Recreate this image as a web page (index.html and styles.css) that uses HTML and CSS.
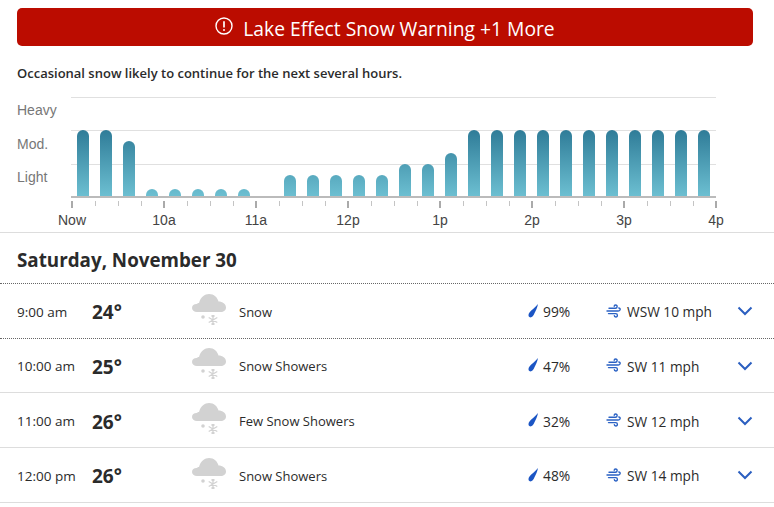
FILE: index.html
```html
<!DOCTYPE html>
<html lang="en">
<head>
  <meta charset="UTF-8">
  <title>Hourly Forecast</title>
  <link rel="stylesheet" href="styles.css">
</head>
<body>

<svg class="defs" width="0" height="0" aria-hidden="true">
  <defs>
    <linearGradient id="barFill" gradientUnits="userSpaceOnUse" x1="0" y1="33" x2="0" y2="100">
      <stop offset="0" stop-color="#2f7c98"/>
      <stop offset="1" stop-color="#6dc0d2"/>
    </linearGradient>
    <symbol id="snowIcon" viewBox="0 0 36 36">
      <path fill="#d2d2d2" d="M6 19C3 19 1 17.3 1 15C1 12.6 3 11 5.5 11C6.5 10.5 7 10 8 10C9.5 4 14 1 18 1C23 1 26.5 4.5 27.5 8.5C31.5 8.5 35 11 35 14.5C35 17.3 32.5 19 30 19Z"/>
      <circle cx="12" cy="24" r="1.8" fill="#d2d2d2"/>
      <path stroke="#d2d2d2" stroke-width="1.3" fill="none" d="M22 22V32M17.7 24.5L26.3 29.5M17.7 29.5L26.3 24.5M20.5 22.5L22 24L23.5 22.5M20.5 31.5L22 30L23.5 31.5"/>
    </symbol>
    <symbol id="dropIcon" viewBox="0 0 10 14">
      <path fill="#1b55c4" d="M10 0C9.2 4 8 6 6.6 9C5.5 12 3.5 14 1.8 13.3C0 12.5 0.2 10 1.5 8.5C3.5 6 7 3.5 10 0Z"/>
    </symbol>
    <symbol id="windIcon" viewBox="0 0 15 14">
      <path fill="none" stroke="#2b62c4" stroke-width="1.4" stroke-linecap="round" d="M3 4.2H9.5C11.5 4.2 11.8 1 9.6 1C8.6 1 8.2 1.7 8.2 2.3M1 7H12.3C14.6 7 14.8 4 12.8 4M2.5 9.6H9.8C11.8 9.6 12 13 9.8 13C8.8 13 8.3 12.2 8.3 11.6"/>
    </symbol>
    <symbol id="chevronIcon" viewBox="0 0 16 10">
      <path fill="none" stroke="#2b5fc0" stroke-width="2" d="M1.5 1.5L8 8L14.5 1.5"/>
    </symbol>
  </defs>
</svg>

<div class="alert">
  <svg class="alert-icon" viewBox="0 0 18 18">
    <circle cx="9" cy="9" r="8" fill="none" stroke="#fff" stroke-width="1.4"/>
    <path d="M9 4.2V10.5" stroke="#fff" stroke-width="1.7" fill="none"/>
    <circle cx="9" cy="13" r="1" fill="#fff"/>
  </svg>
  <span>Lake Effect Snow Warning +1 More</span>
</div>

<p class="summary">Occasional snow likely to continue for the next several hours.</p>

<svg class="chart" viewBox="0 0 774 135" width="774" height="135">
  <g class="grid">
    <line x1="71" x2="716" y1="0.5" y2="0.5"/>
    <line x1="71" x2="716" y1="33.5" y2="33.5"/>
    <line x1="71" x2="716" y1="67.5" y2="67.5"/>
  </g>
  <g class="level">
    <text x="17" y="18">Heavy</text>
    <text x="17" y="52">Mod.</text>
    <text x="17" y="85">Light</text>
  </g>
  <g fill="url(#barFill)">
    <path d="M77 100V39a6 6 0 0 1 12 0V100Z"/>
    <path d="M100 100V39a6 6 0 0 1 12 0V100Z"/>
    <path d="M123 100V50a6 6 0 0 1 12 0V100Z"/>
    <path d="M146 100V98a6 6 0 0 1 12 0V100Z"/>
    <path d="M169 100V98a6 6 0 0 1 12 0V100Z"/>
    <path d="M192 100V98a6 6 0 0 1 12 0V100Z"/>
    <path d="M215 100V98a6 6 0 0 1 12 0V100Z"/>
    <path d="M238 100V98a6 6 0 0 1 12 0V100Z"/>
    <path d="M284 100V84a6 6 0 0 1 12 0V100Z"/>
    <path d="M307 100V84a6 6 0 0 1 12 0V100Z"/>
    <path d="M330 100V84a6 6 0 0 1 12 0V100Z"/>
    <path d="M353 100V84a6 6 0 0 1 12 0V100Z"/>
    <path d="M376 100V84a6 6 0 0 1 12 0V100Z"/>
    <path d="M399 100V73a6 6 0 0 1 12 0V100Z"/>
    <path d="M422 100V73a6 6 0 0 1 12 0V100Z"/>
    <path d="M445 100V62a6 6 0 0 1 12 0V100Z"/>
    <path d="M468 100V39a6 6 0 0 1 12 0V100Z"/>
    <path d="M491 100V39a6 6 0 0 1 12 0V100Z"/>
    <path d="M514 100V39a6 6 0 0 1 12 0V100Z"/>
    <path d="M537 100V39a6 6 0 0 1 12 0V100Z"/>
    <path d="M560 100V39a6 6 0 0 1 12 0V100Z"/>
    <path d="M583 100V39a6 6 0 0 1 12 0V100Z"/>
    <path d="M606 100V39a6 6 0 0 1 12 0V100Z"/>
    <path d="M629 100V39a6 6 0 0 1 12 0V100Z"/>
    <path d="M652 100V39a6 6 0 0 1 12 0V100Z"/>
    <path d="M675 100V39a6 6 0 0 1 12 0V100Z"/>
    <path d="M698 100V39a6 6 0 0 1 12 0V100Z"/>
  </g>
  <line class="base" x1="71" x2="716" y1="100" y2="100"/>
  <path class="ticks" d="M72.5 104V109M95.5 104V109M118.5 104V109M141.5 104V109M164.5 104V109M187.5 104V109M210.5 104V109M233.5 104V109M256.5 104V109M279.5 104V109M302.5 104V109M325.5 104V109M348.5 104V109M371.5 104V109M394.5 104V109M417.5 104V109M440.5 104V109M463.5 104V109M486.5 104V109M509.5 104V109M532.5 104V109M555.5 104V109M578.5 104V109M601.5 104V109M624.5 104V109M647.5 104V109M670.5 104V109M693.5 104V109M716.5 104V109"/>
  <path class="ticks major" d="M72 104V111M164 104V111M256 104V111M348 104V111M440 104V111M532 104V111M624 104V111M716 104V111"/>
  <g class="hours">
    <text x="72" y="128">Now</text>
    <text x="164" y="128">10a</text>
    <text x="256" y="128">11a</text>
    <text x="348" y="128">12p</text>
    <text x="440" y="128">1p</text>
    <text x="532" y="128">2p</text>
    <text x="624" y="128">3p</text>
    <text x="716" y="128">4p</text>
  </g>
</svg>

<h2 class="day">Saturday, November 30</h2>

<div class="rows">
  <div class="row">
    <span class="time">9:00 am</span>
    <span class="temp">24°</span>
    <svg class="wx"><use href="#snowIcon"/></svg>
    <span class="phrase">Snow</span>
    <svg class="drop"><use href="#dropIcon"/></svg>
    <span class="pop">99%</span>
    <svg class="wind"><use href="#windIcon"/></svg>
    <span class="speed">WSW 10 mph</span>
    <svg class="chevron"><use href="#chevronIcon"/></svg>
  </div>
  <div class="row">
    <span class="time">10:00 am</span>
    <span class="temp">25°</span>
    <svg class="wx"><use href="#snowIcon"/></svg>
    <span class="phrase">Snow Showers</span>
    <svg class="drop"><use href="#dropIcon"/></svg>
    <span class="pop">47%</span>
    <svg class="wind"><use href="#windIcon"/></svg>
    <span class="speed">SW 11 mph</span>
    <svg class="chevron"><use href="#chevronIcon"/></svg>
  </div>
  <div class="row">
    <span class="time">11:00 am</span>
    <span class="temp">26°</span>
    <svg class="wx"><use href="#snowIcon"/></svg>
    <span class="phrase">Few Snow Showers</span>
    <svg class="drop"><use href="#dropIcon"/></svg>
    <span class="pop">32%</span>
    <svg class="wind"><use href="#windIcon"/></svg>
    <span class="speed">SW 12 mph</span>
    <svg class="chevron"><use href="#chevronIcon"/></svg>
  </div>
  <div class="row">
    <span class="time">12:00 pm</span>
    <span class="temp">26°</span>
    <svg class="wx"><use href="#snowIcon"/></svg>
    <span class="phrase">Snow Showers</span>
    <svg class="drop"><use href="#dropIcon"/></svg>
    <span class="pop">48%</span>
    <svg class="wind"><use href="#windIcon"/></svg>
    <span class="speed">SW 14 mph</span>
    <svg class="chevron"><use href="#chevronIcon"/></svg>
  </div>
</div>

</body>
</html>
```

FILE: styles.css
```css
body {
  font-family: "Open Sans", "Noto Sans", Arial, sans-serif;
  color: #2b2b2b;
  background-color: #fff;
  margin: 0;
  overflow: hidden;
}

.defs {
  display: block;
  height: 0;
}

.alert {
  display: flex;
  align-items: center;
  justify-content: center;
  gap: 10px;
  height: 38px;
  box-sizing: border-box;
  padding-top: 2px;
  margin: 8px 21px 0 17px;
  background-color: #bb0c00;
  border-radius: 5px;
  color: #fff;
  font-size: 19.3px;
}

.alert-icon {
  width: 18px;
  height: 18px;
  margin-top: -4px;
}

.summary {
  margin: 18px 0 0 17px;
  height: 33px;
  line-height: 18px;
  font-size: 13px;
  font-weight: 600;
}

.chart {
  display: block;
  font-family: "Liberation Sans", Arial, sans-serif;
  font-size: 14px;
}

.grid line {
  stroke: #e0e0e0;
  stroke-width: 1;
}

.level text {
  fill: #777;
}

.base {
  stroke: #bbb;
  stroke-width: 2;
}

.ticks {
  stroke: #c4c4c4;
  stroke-width: 1;
  fill: none;
}

.ticks.major {
  stroke: #aaa;
  stroke-width: 2;
}

.hours text {
  fill: #444;
  text-anchor: middle;
}

.day {
  margin: 0;
  padding: 0 0 0 17px;
  height: 52px;
  line-height: 54px;
  box-sizing: border-box;
  border-top: 1px solid #ddd;
  border-bottom: 1px dotted #666;
  font-size: 18.8px;
  font-weight: 700;
}

.rows {
  display: flex;
  flex-direction: column;
}

.row {
  display: grid;
  grid-template-columns: 75px 99px 48px 289px 15px 63px 21px 110px 14px;
  align-items: center;
  height: 54.67px;
  box-sizing: border-box;
  padding-left: 17px;
  border-bottom: 1px solid #ddd;
  font-size: 13px;
}

.row:first-child {
  border-bottom: 1px dotted #666;
}

.row span {
  padding-top: 2px;
}

.time {
  font-size: 13.5px;
}

.row .temp {
  padding-top: 3px;
  font-size: 19px;
  font-weight: 700;
}

.pop {
  font-size: 13.8px;
}

.speed {
  font-size: 13.7px;
}

.wx {
  width: 36px;
  height: 36px;
}

.drop {
  width: 10px;
  height: 14px;
}

.wind {
  width: 15px;
  height: 14px;
}

.chevron {
  width: 16px;
  height: 10px;
  margin-top: 1px;
}
```
